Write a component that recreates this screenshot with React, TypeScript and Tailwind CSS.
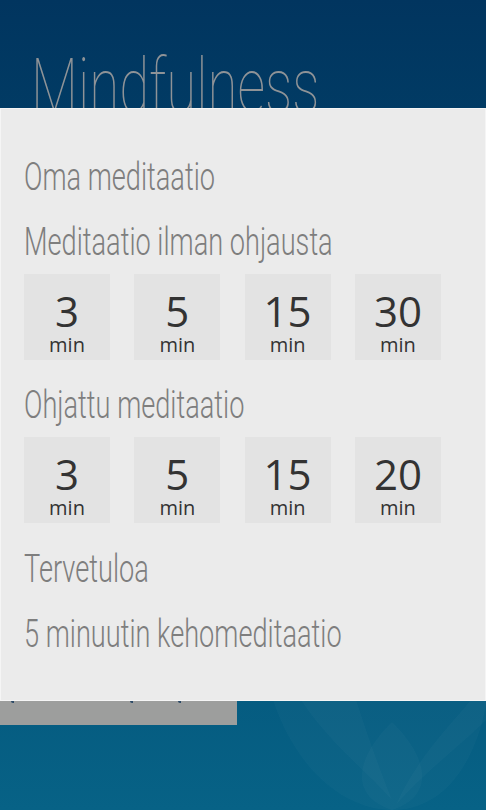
import React from "react";

const rows: { title: string; items: string[] }[] = [
  { title: "Meditaatio ilman ohjausta", items: ["3", "5", "15", "30"] },
  { title: "Ohjattu meditaatio", items: ["3", "5", "15", "20"] },
];

function Heading({ text, className = "" }: { text: string; className?: string }) {
  return (
    <div className={`h-[38px] ${className}`}>
      <span
        className="inline-block origin-left scale-x-[0.715] whitespace-nowrap text-[38px] font-light leading-none text-[#7e7e7e]"
        style={{ fontFamily: "Roboto, sans-serif" }}
      >
        {text}
      </span>
    </div>
  );
}

function Tile({ n }: { n: string }) {
  return (
    <div
      className="flex h-[86px] w-[86px] flex-col items-center bg-[#e3e3e3] pt-[16px] text-[#333333]"
      style={{ fontFamily: "'Open Sans', sans-serif" }}
    >
      <span className="h-[42px] text-[42px] leading-none">{n}</span>
      <span className="mt-[3px] text-[20px] leading-none">min</span>
    </div>
  );
}

export default function App() {
  return (
    <div className="relative h-[810px] w-[486px] overflow-hidden bg-gradient-to-b from-[#01355f] to-[#076286]">
      <svg
        className="absolute bottom-0 right-0"
        width="240"
        height="110"
        viewBox="0 0 240 110"
      >
        <g fill="#ffffff" fillOpacity="0.022">
          <path d="M27 0 C 50 70, 100 112, 150 110 C 200 108, 230 60, 240 5 L 240 0 Z" />
          <path d="M146 22 C 112 55, 100 95, 146 110 C 192 95, 180 55, 146 22 Z" />
          <path d="M55 0 C 85 45, 120 70, 146 100 C 130 60, 120 30, 110 0 Z" />
          <path d="M240 20 C 215 45, 175 75, 150 105 C 170 60, 200 30, 225 0 L 240 0 Z" />
        </g>
      </svg>

      <div className="h-[108px] pl-[31px] pt-[48px]">
        <span
          className="inline-block origin-left scale-x-[0.72] whitespace-nowrap text-[76px] font-thin leading-none text-[#8f9397]"
          style={{ fontFamily: "Roboto, sans-serif" }}
        >
          Mindfulness
        </span>
      </div>

      <div className="relative z-10 box-border h-[593px] w-[486px] border border-[#f5f5f5] bg-[#ebebeb] pl-[23px] pt-[49px]">
        <Heading text="Oma meditaatio" />
        <Heading text={rows[0].title} className="mt-[27px]" />
        <div className="mt-[13px] flex gap-[24.3px]">
          {rows[0].items.map((n) => (
            <Tile key={n} n={n} />
          ))}
        </div>
        <Heading text={rows[1].title} className="mt-[26px]" />
        <div className="mt-[13px] flex gap-[24.3px]">
          {rows[1].items.map((n) => (
            <Tile key={n} n={n} />
          ))}
        </div>
        <Heading text="Tervetuloa" className="mt-[27px]" />
        <Heading text="5 minuutin kehomeditaatio" className="mt-[27px]" />
      </div>

      <div className="relative h-[24px] w-[237px] bg-[#9d9e9d]">
        <span className="absolute left-[11px] top-0 h-[2px] w-[3px] rounded-bl-full bg-[#2c4a66]" />
        <span className="absolute left-[130px] top-0 h-[2px] w-[3px] rounded-bl-full bg-[#2c4a66]" />
        <span className="absolute left-[178px] top-0 h-[2px] w-[3px] rounded-bl-full bg-[#2c4a66]" />
      </div>
    </div>
  );
}
